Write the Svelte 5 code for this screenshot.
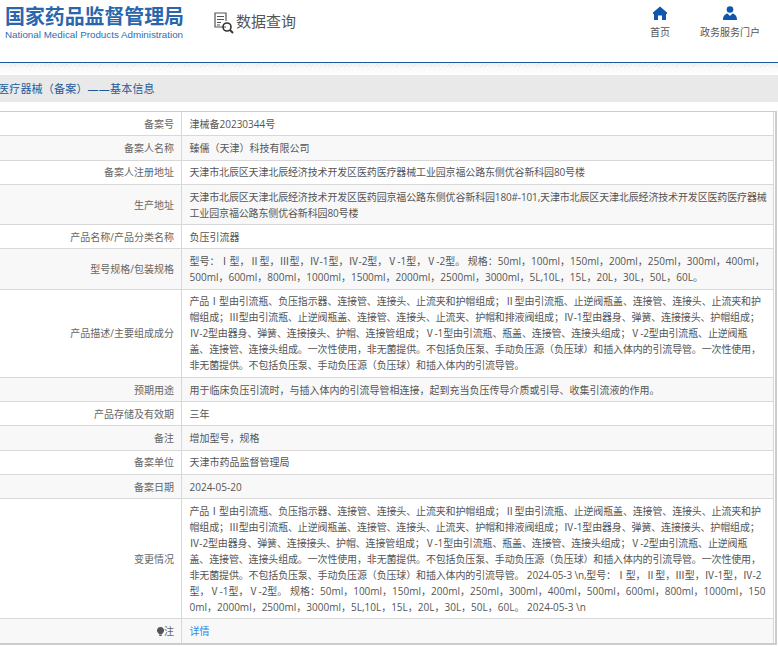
<script>
  const desc = [
    "产品Ⅰ型由引流瓶、负压指示器、连接管、连接头、止流夹和护帽组成；Ⅱ型由引流瓶、止逆阀瓶盖、连接管、连接头、止流夹和护",
    "帽组成；Ⅲ型由引流瓶、止逆阀瓶盖、连接管、连接头、止流夹、护帽和排液阀组成；Ⅳ-1型由器身、弹簧、连接接头、护帽组成；",
    "Ⅳ-2型由器身、弹簧、连接接头、护帽、连接管组成；Ⅴ-1型由引流瓶、瓶盖、连接管、连接头组成；Ⅴ-2型由引流瓶、止逆阀瓶",
    "盖、连接管、连接头组成。一次性使用，非无菌提供。不包括负压泵、手动负压源（负压球）和插入体内的引流导管。一次性使用，",
  ];
  const descEnd = "非无菌提供。不包括负压泵、手动负压源（负压球）和插入体内的引流导管。";

  // lines are kept as the source page wrapped them
  const rows = [
    { label: "备案号", lines: ["津械备20230344号"] },
    { label: "备案人名称", lines: ["臻儒（天津）科技有限公司"] },
    {
      label: "备案人注册地址",
      lines: ["天津市北辰区天津北辰经济技术开发区医药医疗器械工业园京福公路东侧优谷新科园80号楼"],
      tight: true,
    },
    {
      label: "生产地址",
      lines: [
        "天津市北辰区天津北辰经济技术开发区医药园京福公路东侧优谷新科园180#-101,天津市北辰区天津北辰经济技术开发区医药医疗器械",
        "工业园京福公路东侧优谷新科园80号楼",
      ],
      tight: true,
    },
    { label: "产品名称/产品分类名称", lines: ["负压引流器"] },
    {
      label: "型号规格/包装规格",
      lines: [
        "型号：Ⅰ型，Ⅱ型，Ⅲ型，Ⅳ-1型，Ⅳ-2型，Ⅴ-1型，Ⅴ-2型。 规格：50ml，100ml，150ml，200ml，250ml，300ml，400ml，",
        "500ml，600ml，800ml，1000ml，1500ml，2000ml，2500ml，3000ml，5L,10L，15L，20L，30L，50L，60L。",
      ],
    },
    { label: "产品描述/主要组成成分", lines: [...desc, descEnd], tight: true },
    { label: "预期用途", lines: ["用于临床负压引流时，与插入体内的引流导管相连接，起到充当负压传导介质或引导、收集引流液的作用。"] },
    { label: "产品存储及有效期", lines: ["三年"] },
    { label: "备注", lines: ["增加型号，规格"] },
    { label: "备案单位", lines: ["天津市药品监督管理局"] },
    { label: "备案日期", lines: ["2024-05-20"] },
    {
      label: "变更情况",
      lines: [
        ...desc,
        descEnd + " 2024-05-3 \\n,型号：Ⅰ型，Ⅱ型，Ⅲ型，Ⅳ-1型，Ⅳ-2",
        "型，Ⅴ-1型，Ⅴ-2型。 规格：50ml，100ml，150ml，200ml，250ml，300ml，400ml，500ml，600ml，800ml，1000ml，150",
        "0ml，2000ml，2500ml，3000ml，5L,10L，15L，20L，30L，50L，60L。 2024-05-3 \\n",
      ],
      tight: true,
    },
  ];
</script>

<header class="top">
  <div class="logo">
    <div class="logo-cn">国家药品监督管理局</div>
    <div class="logo-en">National Medical Products Administration</div>
  </div>
  <div class="query">
    <svg width="23" height="22" viewBox="0 0 23 22" fill="none" stroke="#555" stroke-width="1.2">
      <path d="M13 15H2V1h11v8" />
      <path d="M4 4.500h7M4 7.500h7M4 10.500h4M4 13h3" />
      <circle cx="14" cy="15" r="4" stroke="#333" stroke-width="1.6" />
      <path d="M17 18l3 3" stroke="#333" stroke-width="2" />
    </svg>
    <span>数据查询</span>
  </div>
  <nav class="nav">
    <div class="nav-item">
      <svg width="14" height="14" viewBox="0 0 14 14" fill="#0f56ad">
        <path d="M7 .5 14 6.500v1.500h-1v6H9V9.500H5V14H1V8H0V6.500z" />
      </svg>
      <span>首页</span>
    </div>
    <div class="nav-item">
      <svg width="14" height="14" viewBox="0 0 14 14" fill="#0f56ad">
        <circle cx="7" cy="3.500" r="3.300" />
        <path d="M0 14c0-4 2-6 4.500-6.500L7 10l2.500-2.500C12 8 14 10 14 14z" />
      </svg>
      <span>政务服务门户</span>
    </div>
  </nav>
</header>

<div class="strip"></div>
<h2 class="title">医疗器械（备案）——基本信息</h2>

<div class="grid">
  {#each rows as row, i}
    <div class="row" class:odd={i % 2 === 1}>
      <div class="label">{row.label}</div>
      <div class="value" class:tight={row.tight}>
        {#each row.lines as line}
          <div class="line">{line}</div>
        {/each}
      </div>
    </div>
  {/each}
  <div class="row odd last">
    <div class="label">
      <svg width="7" height="9" viewBox="0 0 7 9" fill="#555">
        <path d="M3.500 0a3.400 3.400 0 0 1 2 6.200L5 7.500H2l-.5-1.300A3.400 3.400 0 0 1 3.500 0zM2.300 8h2.400v1H2.300z" />
      </svg>注
    </div>
    <div class="value"><span class="link">详情</span></div>
  </div>
</div>

<style>
  :global(body) {
    background: #fff;
    overflow: hidden;
    font-family: "Open Sans", "Noto Sans CJK SC", sans-serif;
    color: #555;
  }

  .top {
    height: 62px;
    display: flex;
    align-items: flex-start;
    border-bottom: 1px solid #1b5a9e;
  }

  .logo {
    margin: 3px 0 0 5px;
    width: 180px;
  }

  .logo-cn {
    font-family: "Noto Sans CJK SC", sans-serif;
    font-size: 19.900px;
    line-height: 26px;
    font-weight: 700;
    color: #2a66ac;
    white-space: nowrap;
  }

  .logo-en {
    font-family: "Liberation Sans", sans-serif;
    font-size: 9.800px;
    line-height: 12px;
    color: #2a6fb5;
    white-space: nowrap;
  }

  .query {
    display: flex;
    align-items: flex-start;
    margin: 12px 0 0 28px;
    font-size: 15px;
    line-height: 18px;
    color: #555;
  }

  .nav {
    margin-left: auto;
    margin-right: 18px;
    display: flex;
    gap: 30px;
    padding-top: 6px;
  }

  .nav-item {
    display: flex;
    flex-direction: column;
    align-items: center;
    gap: 6px;
    font-size: 10px;
    line-height: 12px;
  }

  .strip {
    height: 12px;
    background:
      repeating-linear-gradient(135deg, rgba(0, 0, 0, 0.04) 0 1px, transparent 1px 3px) top / 100% 4px no-repeat,
      linear-gradient(#f4f4f4, #fff);
  }

  .title {
    margin: 0 0 9px;
    height: 27px;
    text-indent: -2px;
    background: #e9e9e9;
    font-size: 11px;
    line-height: 27px;
    font-weight: 400;
    letter-spacing: 0.2px;
    color: #1e5b9e;
    white-space: nowrap;
  }

  .grid {
    width: 777px;
    box-sizing: border-box;
    padding-right: 1px;
    border-top: 1px solid #ccc;
    border-bottom: 2px solid #ccc;
    border-right: 2px solid #ccc;
    font-size: 10px;
    line-height: 16px;
  }

  .row {
    display: grid;
    grid-template-columns: 182px 1fr;
    border-bottom: 1px solid #d8d8d8;
    border-right: 1px solid #d8d8d8;
  }

  .row.last {
    border-bottom: 0;
  }

  .row.odd {
    background: #f8f8f8;
  }

  .label {
    display: flex;
    align-items: center;
    justify-content: flex-end;
    padding: 3.750px 7px 3.500px 0;
    border-right: 1px solid #d8d8d8;
    color: #666;
  }

  .value {
    padding: 3.750px 0 3.500px 7.500px;
    min-width: 0;
    color: #555;
  }

  .line {
    white-space: nowrap;
  }

  .tight .line:nth-child(-n + 5) {
    letter-spacing: -0.15px;
  }

  .link {
    color: #2f8ae6;
  }
</style>
